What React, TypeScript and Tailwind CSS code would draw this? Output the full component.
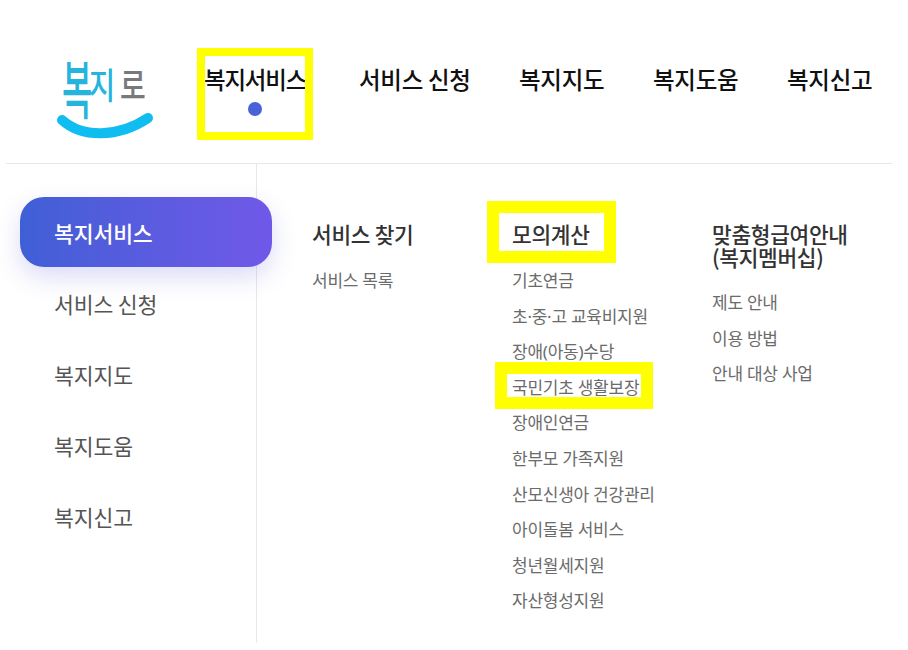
import React from "react";

const font = { fontFamily: '"Noto Sans CJK KR", "Noto Sans", sans-serif' };
const itemFont = { fontFamily: '"Noto Sans", "Noto Sans CJK KR", sans-serif' };

function Logo() {
  return (
    <svg width="112" height="100" viewBox="0 0 112 100" className="shrink-0" aria-label="복지로">
      <g style={font} fontWeight="500">
        <text transform="translate(12 65) scale(1.1 2.1)" fontSize="30" fill="#25b4dc">복</text>
        <text transform="translate(39 51) scale(0.95 1.2)" fontSize="30" fill="#25b4dc">지</text>
        <text transform="translate(70 51) scale(1 1.3)" fontSize="28" fill="#77797c">로</text>
      </g>
      <path d="M12 72 C 32 90, 68 90, 98 70" fill="none" stroke="#10bdf0" strokeWidth="10" strokeLinecap="round" />
    </svg>
  );
}

const top = ["서비스 신청", "복지지도", "복지도움", "복지신고"];
const side = ["서비스 신청", "복지지도", "복지도움", "복지신고"];
const calc = ["기초연금", "초·중·고 교육비지원", "장애(아동)수당", "국민기초 생활보장", "장애인연금", "한부모 가족지원", "산모신생아 건강관리", "아이돌봄 서비스", "청년월세지원", "자산형성지원"];
const mem = ["제도 안내", "이용 방법", "안내 대상 사업"];

function Item({ children, mark }: { children: string; mark?: boolean }) {
  return (
    <li style={itemFont} className="relative h-[35.6px] leading-[35.6px] text-[17px] tracking-[-0.25px] whitespace-nowrap text-[#6b6b6b]">
      {children}
      {mark && <span className="absolute left-[-17px] top-[-8px] w-[158px] h-[47px] border-[12px] border-[#ffff00]" />}
    </li>
  );
}

export default function App() {
  return (
    <div className="w-[908px] h-[650px] bg-white overflow-hidden" style={font}>
      <header className="h-[164px] ml-[6px] mr-[16px] border-b border-[#e8e8e8] flex">
        <div className="pl-[44px] pt-[48px] w-[191px] shrink-0"><Logo /></div>
        <nav className="flex items-start pt-[62px] text-[23.5px] font-medium text-[#111] tracking-[-0.3px] whitespace-nowrap">
          <div className="relative w-[162px] pl-[7px] tracking-[-1.2px]">
            복지서비스
            <span className="absolute left-[51px] top-[40px] w-[14px] h-[14px] rounded-full bg-[#4a62d8]" />
            <span className="absolute left-0 top-[-14px] w-[116px] h-[92px] border-[8px] border-[#ffff00]" />
          </div>
          <span className="w-[160px]">{top[0]}</span>
          <span className="w-[134px]">{top[1]}</span>
          <span className="w-[134px]">{top[2]}</span>
          <span>{top[3]}</span>
        </nav>
      </header>

      <div className="flex mx-[6px] h-[479px]">
        <aside className="w-[251px] shrink-0 border-r border-[#e8e8e8] pt-[33px] pl-[14px]">
          <div className="w-[252px] h-[70px] rounded-[24px] bg-gradient-to-r from-[#3f5fd6] to-[#7058e8] shadow-[0_10px_24px_rgba(90,90,220,0.22)] text-white text-[21.6px] font-medium tracking-[-0.15px] flex items-center pl-[34px] pt-[2px] relative">
            복지서비스
          </div>
          <ul className="pl-[34px] mt-[1px] text-[21.6px] text-[#555] tracking-[-0.15px]">
            {side.map((s) => <li key={s} className="h-[71px] leading-[71px]">{s}</li>)}
          </ul>
        </aside>

        <section className="flex pl-[55px] pt-[55px] text-[#333]">
          <div className="w-[200px]">
            <h3 className="text-[21.4px] leading-[30px] font-medium tracking-[-0.3px]">서비스 찾기</h3>
            <ul className="mt-[14px]"><Item>서비스 목록</Item></ul>
          </div>
          <div className="w-[200px]">
            <h3 className="relative text-[21.4px] leading-[30px] font-medium tracking-[-0.3px]">
              모의계산
              <span className="absolute left-[-25px] top-[-18px] w-[129px] h-[62px] border-[12px] border-[#ffff00]" />
            </h3>
            <ul className="mt-[14px]">
              {calc.map((c, i) => <Item key={c} mark={i === 3}>{c}</Item>)}
            </ul>
          </div>
          <div className="w-[170px]">
            <h3 className="text-[21.4px] leading-[23px] mt-[3px] font-medium tracking-[-0.3px]">맞춤형급여안내<br />(복지멤버십)</h3>
            <ul className="mt-[17px]">
              {mem.map((m) => <Item key={m}>{m}</Item>)}
            </ul>
          </div>
        </section>
      </div>
    </div>
  );
}
